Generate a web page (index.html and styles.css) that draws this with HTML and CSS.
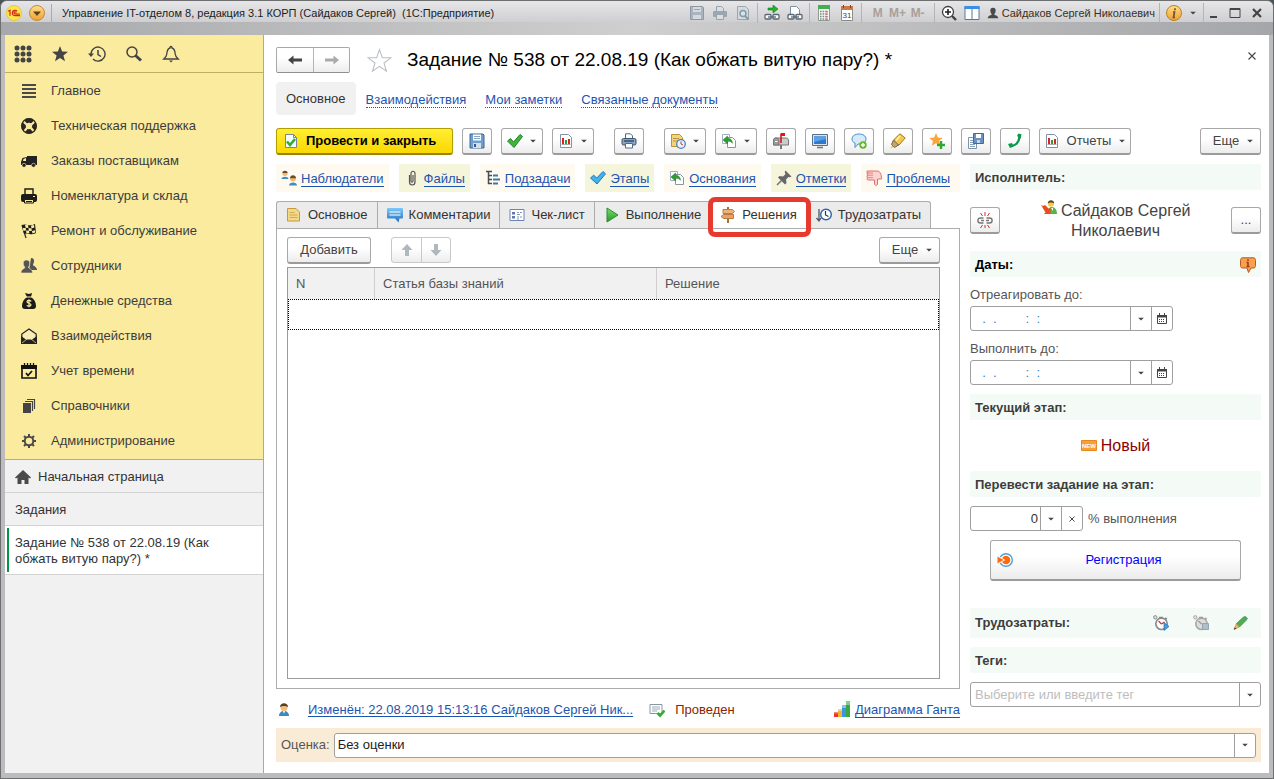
FILE: index.html
```html
<!DOCTYPE html>
<html lang="ru">
<head>
<meta charset="utf-8">
<title>Управление IT-отделом 8</title>
<link rel="stylesheet" href="styles.css">
</head>
<body>
<svg class="defs" aria-hidden="true">
  <defs>
    <linearGradient id="g-green" x1="0" y1="0" x2="0" y2="1"><stop offset="0" stop-color="#7fdc6a"/><stop offset="1" stop-color="#1f9a2e"/></linearGradient>
    <linearGradient id="g-blue" x1="0" y1="0" x2="0" y2="1"><stop offset="0" stop-color="#7cc8f8"/><stop offset="1" stop-color="#1c6fc4"/></linearGradient>
    <linearGradient id="g-gold" x1="0" y1="0" x2="0" y2="1"><stop offset="0" stop-color="#ffdf8a"/><stop offset="1" stop-color="#f0a030"/></linearGradient>
    <symbol id="floppy" viewBox="0 0 16 16"><path d="M1 1h13l1 1v13H1z" fill="#6f9fd0" stroke="#3d6796"/><path d="M4 1.500h8v6H4z" fill="#fff"/><path d="M5 3.500h6M5 5.500h6" stroke="#8aa4bd"/><path d="M4 10h8v5H4z" fill="#d7dee6"/><path d="M5 11h2v3H5z" fill="#345a86"/></symbol>
    <symbol id="floppy-off" viewBox="0 0 16 16"><path d="M1.500 1.500h12l1 1v12h-13z" fill="#a9b4be" stroke="#8d9aa6"/><path d="M4 2h8v5H4zM4 10h8v4H4z" fill="#d5dade"/><path d="M5 4.500h6" stroke="#9aa6b0"/></symbol>
    <symbol id="print-off" viewBox="0 0 16 16"><path d="M4.500 6V1.500h5l2 2V6" fill="#dcdfe2" stroke="#98a3ad"/><rect x="1" y="6" width="14" height="6" rx="1" fill="#9aa6b1"/><path d="M4.500 9.500h7v5h-7z" fill="#dcdfe2" stroke="#98a3ad"/></symbol>
    <symbol id="preview-off" viewBox="0 0 16 16"><path d="M2.500 1.500h8l3 3v10h-11z" fill="#d5dadd" stroke="#98a7ad"/><circle cx="8" cy="8.500" r="3" fill="#d5e2e8" stroke="#839ba6" stroke-width="1.500"/><path d="M10 11l3.500 3.500" stroke="#839ba6" stroke-width="2"/></symbol>
    <symbol id="link-go" viewBox="0 0 16 16"><path d="M4 3h5V0l5 4-5 4V5H4z" fill="#22b422" stroke="#0c7d16" stroke-width=".6"/><rect x="1" y="9.500" width="6" height="4.500" rx="1" fill="#fff" stroke="#596673" stroke-width="1.300"/><rect x="9" y="9.500" width="6" height="4.500" rx="1" fill="#fff" stroke="#596673" stroke-width="1.300"/><path d="M4 12h8" stroke="#596673" stroke-width="1.300"/></symbol>
    <symbol id="link-doc" viewBox="0 0 16 16"><path d="M3.500 9V1.500h6l3 3V9" fill="#fff" stroke="#7c8fa3"/><rect x="1" y="9.500" width="6" height="4.500" rx="1" fill="#fff" stroke="#596673" stroke-width="1.300"/><rect x="9" y="9.500" width="6" height="4.500" rx="1" fill="#fff" stroke="#596673" stroke-width="1.300"/><path d="M4 12h8" stroke="#596673" stroke-width="1.300"/></symbol>
    <symbol id="calc" viewBox="0 0 16 16"><path d="M2.500.5h11v15h-11z" fill="#f6f6f6" stroke="#8f9a94"/><path d="M2 0h12v4H2z" fill="#45ae4e"/><path d="M4 6.500h8M4 9h8M4 11.500h8M4 14h8" stroke="#7d8a84" stroke-width="1.400" stroke-dasharray="1.600 1"/><path d="M11 6v9" stroke="#c84a3c" stroke-dasharray="1.500 1"/></symbol>
    <symbol id="cal31" viewBox="0 0 16 16"><path d="M2.500 2.500h11v13h-11z" fill="#fff" stroke="#8b8b8b"/><path d="M2 1h12v4H2z" fill="#c9794a"/><path d="M4.500 0v3M11.500 0v3" stroke="#7b4424"/><text x="8" y="13" font-size="8" text-anchor="middle" fill="#444">31</text></symbol>
    <symbol id="zoomin" viewBox="0 0 16 16"><circle cx="7" cy="7" r="5.500" fill="#fff" stroke="#404040" stroke-width="1.300"/><path d="M4 7h6M7 4v6" stroke="#222" stroke-width="1.600"/><path d="M11 11l4 4" stroke="#404040" stroke-width="2.400"/></symbol>
    <symbol id="panels" viewBox="0 0 16 16"><path d="M1 1.500h14v13H1zM8 4v11" fill="#fff" stroke="#56789c"/><path d="M.5 1h15v3H.5z" fill="#3c8ee0"/></symbol>
    <symbol id="person-dark" viewBox="0 0 16 16"><path d="M8 1c3 0 3.800 2 3.500 4.500S9.700 9 9.700 10c0 1 5.300 1 5.300 5H1c0-4 5.300-4 5.300-5 0-1-1.500-2-1.800-4.500S5 1 8 1z" fill="#4a4a4a"/></symbol>
    <symbol id="tri" viewBox="0 0 8 8"><path d="M1.200 2.800h5.600L4 5.600z" fill="#444"/></symbol>
    <symbol id="grid9" viewBox="0 0 18 18"><g fill="#444"><circle cx="3" cy="3" r="2.500"/><circle cx="9" cy="3" r="2.500"/><circle cx="15" cy="3" r="2.500"/><circle cx="3" cy="9" r="2.500"/><circle cx="9" cy="9" r="2.500"/><circle cx="15" cy="9" r="2.500"/><circle cx="3" cy="15" r="2.500"/><circle cx="9" cy="15" r="2.500"/><circle cx="15" cy="15" r="2.500"/></g></symbol>
    <symbol id="star" viewBox="0 0 18 18"><path d="M9 1l2.100 5.500 5.900.3-4.600 3.700 1.600 5.800L9 13l-5 3.300 1.600-5.800L1 6.800l5.900-.3z" fill="#444"/></symbol>
    <symbol id="history" viewBox="0 0 18 18"><path d="M3 9a7 7 0 1 1 2 5" fill="none" stroke="#444" stroke-width="1.400"/><path d="M0 8.500h6L3 12z" fill="#444"/><path d="M10 5v4.500l3 2" fill="none" stroke="#444" stroke-width="1.500"/></symbol>
    <symbol id="search" viewBox="0 0 18 18"><circle cx="7" cy="7" r="5" fill="none" stroke="#444" stroke-width="1.500"/><path d="M10.500 10.500l5.500 5" stroke="#444" stroke-width="3"/></symbol>
    <symbol id="bell" viewBox="0 0 18 18"><path d="M9 1.500c1 0 1 1 1 1.500 2.500.6 3 3 3.200 6 .2 2.500 1.200 3.500 3 5H1.800c1.800-1.500 2.800-2.500 3-5C5 6 5.500 3.600 8 3c0-.5 0-1.500 1-1.500z" fill="none" stroke="#444" stroke-width="1.300"/><path d="M7 15.500h4l-2 2z" fill="#444"/></symbol>
    <symbol id="lines" viewBox="0 0 16 16"><path d="M1 2h14M1 6h14M1 10h14M1 14h14" stroke="#4a4a4a" stroke-width="2"/></symbol>
    <symbol id="ring" viewBox="0 0 16 16"><circle cx="8" cy="8" r="5.500" fill="none" stroke="#2b2622" stroke-width="4.600"/><path d="M2.500 3.500l3 3M13.500 3.500l-3 3M3.500 13l2.500-3M12.500 13L10 10" stroke="#faeb9f" stroke-width="2.200"/><circle cx="8" cy="8" r="7.300" fill="none" stroke="#2b2622" stroke-width="1.200"/></symbol>
    <symbol id="truck" viewBox="0 0 16 16"><path d="M6 3h10v9H0V9l1.500-4L6 4z" fill="#222"/><path d="M2.500 6L5 5v3H2z" fill="#faeb9f"/><circle cx="3" cy="12.300" r="2" fill="#222" stroke="#faeb9f" stroke-width=".6"/><circle cx="12.500" cy="12.300" r="2" fill="#222" stroke="#faeb9f" stroke-width=".6"/></symbol>
    <symbol id="printer-dark" viewBox="0 0 16 16"><path d="M4 7V1h8v6" fill="#faeb9f" stroke="#1b1b1b" stroke-width="1.400"/><rect y="6" width="16" height="8" rx="2" fill="#1b1b1b"/><path d="M3.500 11.500h9V15h-9z" fill="#faeb9f" stroke="#1b1b1b"/><path d="M5 13.500h6" stroke="#1b1b1b"/><path d="M12 8.500h2" stroke="#faeb9f"/></symbol>
    <symbol id="flag" viewBox="0 0 16 16"><path d="M1 2l4 13" stroke="#333" stroke-width="1.300"/><path d="M1 2c4-2 7 2 13-1l1 9c-5 3-8-1-12 1z" fill="#1b1b1b"/><path d="M4 1.500l3 .5.500 3-3-.3zM10 2.500l3-.5.400 2.600-3 .8zM1.800 5l2.800-.3.600 2.600-2.700.6zM7.500 5l3 .6.300 2.500-3-.2zM5 7.500l3 .3.400 2.500-3-.2zM11 8l3-.8.300 2.300-2.800.9z" fill="#faeb9f"/></symbol>
    <symbol id="people" viewBox="0 0 16 16"><path d="M10 0c2.500 0 3.300 1.500 3 3.700-.2 1.700-1 2.200-1 3.300 0 1 4 1.500 4 5H8z" fill="#555"/><path d="M5.500 2c2.500 0 3.500 1.500 3.200 4C8.500 8 7.500 8.500 7.500 9.500c0 1.200 4 1 4 5.500H0c0-4.500 3.800-4 3.800-5.500 0-1-1.300-1.500-1.500-3.500-.2-2.500.7-4 3.200-4z" fill="#555" stroke="#faeb9f" stroke-width=".6"/></symbol>
    <symbol id="money" viewBox="0 0 16 16"><path d="M4 0l4 1 3-1-1 4c3 2 5 5 5 9 0 2-1 3-3 3H4c-2 0-3-1-3-3 0-4 2-7 5-9z" fill="#1b1b1b"/><path d="M5 4h6" stroke="#faeb9f"/><path d="M10.300 8.300C9 7 6 7 6 8.700s4 1.300 4 3.100-3 1.900-4.300.6M8 6.300v8" fill="none" stroke="#faeb9f" stroke-width="1.200"/></symbol>
    <symbol id="mail" viewBox="0 0 16 16"><path d="M.8 15V6L8 1l7.200 5v9z" fill="#f8edb5" stroke="#222" stroke-width="1.200"/><path d="M0 8l5 3.500h6L16 8v8H0z" fill="#222"/><path d="M1 15l5-4M15 15l-5-4" stroke="#faeb9f" stroke-width=".7"/></symbol>
    <symbol id="cal-dark" viewBox="0 0 16 16"><path d="M1 3h14v12H1z" fill="none" stroke="#111" stroke-width="1.600"/><path d="M0 2h16v4H0z" fill="#111"/><path d="M3.500 0v3M6.500 0v3M9.500 0v3M12.500 0v3" stroke="#111" stroke-width="1.300"/><path d="M5 10l2 2.500L11 8" fill="none" stroke="#111" stroke-width="1.700"/></symbol>
    <symbol id="books" viewBox="0 0 16 16"><path d="M2 5h8v10H2z" fill="#444"/><path d="M4 3.500h7.500V13M6 1.500h7.500V11" fill="none" stroke="#444" stroke-width="1.200"/></symbol>
    <symbol id="gear" viewBox="0 0 16 16"><circle cx="8" cy="8" r="4.300" fill="none" stroke="#4a4a4a" stroke-width="2"/><path d="M8 1v3M8 12v3M1 8h3M12 8h3M3 3l2 2M11 11l2 2M3 13l2-2M11 5l2-2" stroke="#4a4a4a" stroke-width="2"/></symbol>
    <symbol id="home" viewBox="0 0 16 16"><path d="M8 1l8 7.500-1 1-1.500-1V15H9.500v-4h-3v4h-4V8.500L1 9.500l-1-1z" fill="#4a4a4a"/></symbol>
    <symbol id="arr-l" viewBox="0 0 16 16"><path d="M1 8l5.500-4.500v3H15v3H6.500v3z" fill="#444"/></symbol>
    <symbol id="arr-r" viewBox="0 0 16 16"><path d="M15 8L9.500 3.500v3H1v3h8.500v3z" fill="#aaa"/></symbol>
    <symbol id="star-o" viewBox="0 0 24 24"><path d="M12 1.500l2.700 7.800 8.200.1-6.600 5 2.400 7.900L12 17.600l-6.700 4.700 2.400-7.900-6.600-5 8.200-.1z" fill="#fff" stroke="#b8bec4"/></symbol>
    <symbol id="doc-ok" viewBox="0 0 16 16"><path d="M2.500 1.500h8l3 3v10h-11z" fill="#f7faff" stroke="#72879a"/><path d="M10.500 1.500v3h3" fill="none" stroke="#72879a"/><path d="M4 8.500l3 3.500 5-6" fill="none" stroke="#2cae35" stroke-width="2.600"/></symbol>
    <symbol id="check-g" viewBox="0 0 16 16"><path d="M.5 8l3-2.500L6.500 9 13 1.500l2.500 2L7 14.500z" fill="#3fb53f" stroke="#23802b"/></symbol>
    <symbol id="check-b" viewBox="0 0 16 16"><path d="M.5 8l3.200-2.800L6.800 8 13 1.500l2.500 2.300L7 14z" fill="#3fb4f0" stroke="#2177b8"/></symbol>
    <symbol id="chart" viewBox="0 0 16 16"><path d="M2.500 1.500h8l3 3v10h-11z" fill="#fff" stroke="#8293a5"/><path d="M5 5v6" stroke="#d22" stroke-width="2"/><path d="M8 7v4" stroke="#29a038" stroke-width="2"/><path d="M11 6v5" stroke="#d22" stroke-width="2"/><path d="M3.500 11.500h9" stroke="#aaa"/></symbol>
    <symbol id="print" viewBox="0 0 16 16"><path d="M4.500 6V.8h5l2 2V6" fill="#fff" stroke="#4e6c8d"/><rect x="1" y="5.500" width="14" height="6.500" rx="1.500" fill="#8aa6c2" stroke="#36536f"/><path d="M3 8h10" stroke="#304e6d" stroke-width="1.500"/><path d="M4.500 10.500h7v4.500h-7z" fill="#fff" stroke="#4e6c8d"/></symbol>
    <symbol id="note-clock" viewBox="0 0 16 16"><path d="M1.500 1.500h8l3 3v9h-11z" fill="#f2d47c" stroke="#b99342"/><path d="M3 5.500h6M3 8h6" stroke="#b99342"/><circle cx="11" cy="11" r="4.300" fill="#e8f3ff" stroke="#4d80b8" stroke-width="1.300"/><path d="M11 11V8.500M11 11l2 1" stroke="#c33"/></symbol>
    <symbol id="doc-back" viewBox="0 0 16 16"><path d="M1.500 1.500h7v9h-7z" fill="#fff" stroke="#9fb0bf"/><path d="M6.500 4.500h5l3 3v7h-8z" fill="#fff" stroke="#8498aa"/><path d="M2 7l4.500-4v2.300c3 0 4.700 1.500 5 5-1.200-1.700-2.700-2-5-2V11z" fill="#2f9e35" stroke="#1d7425" stroke-width=".5"/></symbol>
    <symbol id="mailbox" viewBox="0 0 16 16"><path d="M3 5h10c2 0 2.500 1 2.500 3v4H.5V8c0-2 .7-3 2.500-3z" fill="#ccc" stroke="#777"/><path d="M6 12V8c0-2-1-3-3-3S.5 6 .5 8v4z" fill="#9b9b9b" stroke="#777"/><path d="M2 8.500h2.500" stroke="#fff"/><path d="M8 10V.5" stroke="#c11" stroke-width="1.500"/><path d="M8 0h4v3H8z" fill="#e11"/><path d="M8 12v4" stroke="#777" stroke-width="2"/></symbol>
    <symbol id="monitor" viewBox="0 0 16 16"><path d="M.5 1.500h15v11H.5z" fill="#dbe2e9" stroke="#5d6f80"/><path d="M2 3h12v8H2z" fill="#2c78cf"/><path d="M2 3h12v3L2 9z" fill="#5da0e8"/><path d="M5 14.500h6" stroke="#777" stroke-width="1.600"/></symbol>
    <symbol id="chat-add" viewBox="0 0 16 16"><path d="M8 1c4 0 7 2 7 5s-3 5-7 5H7l-3 3.500V10C2 9.500 1 8 1 6c0-3 3-5 7-5z" fill="#d6eafb" stroke="#4b8ec6"/><circle cx="12" cy="12" r="3.700" fill="#69b72c"/><path d="M12 10v4M10 12h4" stroke="#fff" stroke-width="1.400"/></symbol>
    <symbol id="marker" viewBox="0 0 16 16"><path d="M10 .8L15.200 5 9 12l-4.500.5L3 11l1-4.500z" fill="#f7c948" stroke="#a4741c"/><path d="M3.500 7l5 5-4 2.500-3-3z" fill="#b8a882" stroke="#75603a"/><path d="M2 13l-1.500 2.500L4 14z" fill="#f0c020"/><path d="M10 3L6 7.500" stroke="#fff3b5" stroke-width="1.500"/></symbol>
    <symbol id="star-add" viewBox="0 0 16 16"><path d="M7 0l1.800 4.600 4.900.3L10 8l1.200 4.800L7 10.200l-4.200 2.600L4 8 .3 4.900l4.900-.3z" fill="#f8a63a"/><path d="M12 8v8M8 12h8" stroke="#2fa82f" stroke-width="2.400"/></symbol>
    <symbol id="doc-save" viewBox="0 0 16 16"><path d="M.5 4.500h8v11h-8z" fill="#fff" stroke="#7c94ab"/><path d="M2 7.500h5M2 9.500h5M2 11.500h5M2 13.500h5" stroke="#8ba1b6"/><path d="M5.500.5h10v10h-10z" fill="#6992c0" stroke="#456a96"/><path d="M8 1h5v4H8z" fill="#fff"/><path d="M9 7h3v3H9z" fill="#c9d6e4"/></symbol>
    <symbol id="phone" viewBox="0 0 16 16"><path d="M3.500 13c5 0 8.500-3.500 9-9.500" fill="none" stroke="#0a9a4c" stroke-width="2.400"/><path d="M1 11l4-1 1.500 3.500L3 15zM10 3l1.500-2.500 3 .8-.7 4.500z" fill="#0a9a4c"/></symbol>
    <symbol id="users" viewBox="0 0 16 16"><path d="M.5 9c0-3 7-3 7 0z" fill="#3f8fbd"/><circle cx="4" cy="3.300" r="2.600" fill="#f0b878"/><path d="M1.400 3C1.500 0 6.500 0 6.600 3z" fill="#704a28"/><path d="M8 15.500c0-4 8-4 8 0z" fill="#3f8fbd"/><circle cx="12" cy="8.600" r="2.900" fill="#f0b878"/><path d="M9 8.300c0-4 6-4 6 0z" fill="#704a28"/></symbol>
    <symbol id="user" viewBox="0 0 16 16"><path d="M3 14c0-3 2-5 5-5s5 2 5 5z" fill="#3a8ac0"/><circle cx="8" cy="5.500" r="3.500" fill="#f2bb78"/><path d="M4 5c0-5 8-5 8 0-2-1.500-6-1.500-8 0z" fill="#55402b"/><path d="M7 9h2l-1 3z" fill="#fff"/></symbol>
    <symbol id="clip" viewBox="0 0 16 16"><path d="M5.500 5v7c0 4 5.500 4 5.500 0V3.500c0-3-4-3-4 0V11c0 1.500 2 1.500 2 0V5" fill="none" stroke="#555" stroke-width="1.200"/></symbol>
    <symbol id="tree" viewBox="0 0 16 16"><path d="M1 1.500h6M3.500 2v11.500H7M3.500 5.500H7M3.500 9.500H7" fill="none" stroke="#454d55" stroke-width="1.500"/><path d="M8 5.500h5M8 9.500h7M8 13.500h5" stroke="#3f78a8" stroke-width="2"/></symbol>
    <symbol id="pin" viewBox="0 0 16 16"><path d="M9.500.5l6 6-1.500.8-1.500-.3-2.500 2.500.5 3.500L9 14.500 2 7.500 3.500 6l3.500.5L9.500 4 8.700 2z" fill="#66676a"/><path d="M5.500 10.500L1 15" stroke="#777" stroke-width="1.600"/></symbol>
    <symbol id="thumb" viewBox="0 0 16 16"><path d="M1 1h10c3 0 4.500 3 4.500 8h-4v5c0 2-3 2-3-1v-3H2.500c-2 0-2-2-.5-2.300C.5 7.300.5 5.500 2 5.200.5 4.500.5 3 2.200 3 .5 2.500.5 1.500 1 1z" fill="#fbd3d0" stroke="#e07070"/><path d="M2 3h5M2 5.200h5M2 7.700h5" stroke="#e07070" stroke-width=".8"/></symbol>
    <symbol id="note" viewBox="0 0 16 16"><path d="M1.500 1.500h8.500l3.500 3.500v9h-12z" fill="#f3d88a" stroke="#c49a3c"/><path d="M3.500 5.500h5M3.500 8h8M3.500 10.500h8" stroke="#d0ab52"/></symbol>
    <symbol id="comment" viewBox="0 0 16 16"><path d="M1 1h14a1 1 0 0 1 1 1v8.500a1 1 0 0 1-1 1h-2.500L11.500 15.500 8 11.500H1a1 1 0 0 1-1-1V2a1 1 0 0 1 1-1z" fill="url(#g-blue)"/><path d="M2.500 5h11M2.500 8h11" stroke="#fff" stroke-width="1.200"/></symbol>
    <symbol id="checklist" viewBox="0 0 16 16"><path d="M1 2.500h14v11H1z" fill="#fff" stroke="#6f85b7"/><path d="M3 5h3v2.500H3zM3 9h3v2.500H3z" fill="#6379a8"/><path d="M8 5.500h2M11 5.500h2M8 7.500h3M8 10h2M11 10h2M8 12h2" stroke="#8294b8"/></symbol>
    <symbol id="play" viewBox="0 0 16 16"><path d="M3 1l11 7-11 7z" fill="url(#g-green)" stroke="#2b8d2b"/></symbol>
    <symbol id="sign" viewBox="0 0 16 16"><path d="M8 0v16" stroke="#a8713a" stroke-width="2"/><path d="M3 2.500h9.500l2 2-2 2H3z" fill="#eeb177" stroke="#bd7b40"/><path d="M3.500 7.500h10v4h-10l-2.500-2z" fill="#e5a368" stroke="#bd7b40"/></symbol>
    <symbol id="timer" viewBox="0 0 16 16"><path d="M3 2v11M0.500 11L3 14l2-3" fill="none" stroke="#555" stroke-width="1.300"/><circle cx="10" cy="7.500" r="5.300" fill="#fff" stroke="#2d62a8" stroke-width="1.400"/><path d="M9.500 4v4l3 1.500" fill="none" stroke="#333" stroke-width="1.200"/></symbol>
    <symbol id="up" viewBox="0 0 16 16"><path d="M8 2l5.500 6H10v6H6V8H2.500z" fill="#aeb8bd"/></symbol>
    <symbol id="down" viewBox="0 0 16 16"><path d="M8 14l5.500-6H10V2H6v6H2.500z" fill="#aeb8bd"/></symbol>
    <symbol id="unlink" viewBox="0 0 16 16"><path d="M6.500 6H3.500C0 6 0 11 3.500 11h3M9.500 6h3C16 6 16 11 12.500 11h-3M4 8.500h3M9 8.500h3" fill="none" stroke="#777" stroke-width="1.400"/><path d="M8 0v4M3.500 1l2 3M12.500 1l-2 3M8 13v3M3.500 16l2-3M12.500 16l-2-3" stroke="#c33"/></symbol>
    <symbol id="assignee" viewBox="0 0 16 16"><path d="M6 14c0-5 2-7 5-7s5 3 5 7z" fill="#58b548"/><path d="M10 8h2v3z" fill="#fff"/><circle cx="10" cy="3.800" r="3" fill="#f4cf3c"/><path d="M6.800 3.500c0-4.500 6.400-4.500 6.400 0-2-1.500-4.500-1.500-6.400 0z" fill="#5a4520"/><path d="M0 5l2 1 2-1 4 4 1.500-1.500V14H3l1.500-1.500z" fill="#f04a1e"/></symbol>
    <symbol id="info-o" viewBox="0 0 16 16"><path d="M3 .8h10c2 0 2.500 1 2.500 2.700v5c0 1.700-.5 2.500-2.500 2.500h-2L8.500 15.500 7 11H3C1 11 .5 10.200.5 8.500v-5C.5 1.800 1 .8 3 .8z" fill="#f8a04c" stroke="#b85620"/><path d="M8 2.300v1.800M6.500 5.500H8v4M6.500 9.500h3" fill="none" stroke="#9a3a1c" stroke-width="1.500"/></symbol>
    <symbol id="mini-cal" viewBox="0 0 12 12"><path d="M1.500 2.500h9v8h-9z" fill="#fff" stroke="#444"/><path d="M1 2h10v2.500H1z" fill="#444"/><path d="M3.500 0v3M8.500 0v3" stroke="#444"/><path d="M3 6.500h6M3 8.500h6" stroke="#444" stroke-dasharray="1 1"/></symbol>
    <symbol id="new" viewBox="0 0 16 16"><path d="M.5 2.500h15v10H.5z" fill="#f8a032" stroke="#e58a22"/><text x="8" y="10" font-size="6" font-weight="bold" text-anchor="middle" fill="#fff">NEW</text></symbol>
    <symbol id="reg" viewBox="0 0 16 16"><circle cx="9" cy="8" r="6.300" fill="#fff" stroke="#4aa0d8" stroke-width="1.400"/><circle cx="9" cy="8" r="4.300" fill="#ff6a10"/><path d="M0 3.800L7.500 8 0 12.200z" fill="#ff6a10" stroke="#fff" stroke-width="1"/></symbol>
    <symbol id="watch-go" viewBox="0 0 16 16"><circle cx="2.300" cy="2.300" r="1.700" fill="#ddd" stroke="#8c8c8c"/><circle cx="8.500" cy="8.800" r="5.700" fill="#fff" stroke="#8b8b8b" stroke-width="1.700"/><path d="M8.500 9l-3-3M8.500 9l3-2" stroke="#c33" stroke-width="1.200"/><path d="M6 2.500h4M12 3l2 1" stroke="#888" stroke-width="1.500"/><path d="M11 7.500l5 4-5 4z" fill="#4a9be0" stroke="#2870b2" stroke-width=".7"/></symbol>
    <symbol id="watch-off" viewBox="0 0 16 16"><circle cx="2.300" cy="2.300" r="1.700" fill="#ddd" stroke="#aaa"/><circle cx="8.500" cy="8.800" r="5.700" fill="#ddd" stroke="#aaa" stroke-width="1.700"/><path d="M8.500 9l-3-3M6 2.500h4M12 3l2 1" stroke="#999" stroke-width="1.300"/><path d="M9.500 8.500h6v6h-6z" fill="#aebfc9" stroke="#93a5b0"/></symbol>
    <symbol id="pencil" viewBox="0 0 16 16"><path d="M3.500 8.500l7-6.500 3 3-7 7z" fill="#4cb050" stroke="#2d7a35" stroke-width=".6"/><path d="M10.500 2l1.500-1.200L15 3.500 13.500 5z" fill="#596"/><path d="M3.500 8.500l3 3.500L1 14.500z" fill="#e8b868" stroke="#a87a38" stroke-width=".6"/><path d="M1 14.500l.8-2 1.300 1.200z" fill="#222"/></symbol>
    <symbol id="posted" viewBox="0 0 16 16"><path d="M1 2.500h12v9H1z" fill="#fff" stroke="#8797a6"/><path d="M3 5h8M3 7h8M3 9h5" stroke="#9aa8b4"/><path d="M8.500 11l2.500 2.500 4.500-5" fill="none" stroke="#32ab38" stroke-width="2.600"/></symbol>
    <symbol id="gantt" viewBox="0 0 16 16"><path d="M0 11h4v5H0z" fill="#e33"/><path d="M4 8h4v8H4z" fill="#f3b52c"/><path d="M8 4h4v12H8z" fill="#3d95df"/><path d="M12 0h4v16h-4z" fill="#3aa83e"/><path d="M0 11h4v1.500H0zM4 8h4v2H4zM8 4h4v3H8zM12 0h4v4h-4z" fill="#fff" opacity=".4"/></symbol>
  </defs>
</svg>

<div class="window">
  <header class="titlebar">
    <svg class="logo" viewBox="0 0 16 16" aria-hidden="true"><circle cx="8" cy="8" r="7.500" fill="#fbe64b" stroke="#e6c93a"/><path d="M2.200 6.300L4 5.200v5.600M11 6.200C9.800 4.600 6.300 5 6.300 8s2.500 2.800 7.700 2.600M10.500 7.300C9.300 6.400 8 7 8 8s1 1.200 6 1" fill="none" stroke="#d8201c" stroke-width="1.200"/></svg>
    <button class="round" aria-label="Главное меню"><svg viewBox="0 0 16 16"><circle cx="8" cy="8" r="7.500" fill="url(#g-gold)" stroke="#c08a3a"/><path d="M4 6.500h8L8 11z" fill="#5b4420"/></svg></button>
    <span class="sep"></span>
    <h1 class="app-title">Управление IT-отделом 8, редакция 3.1 КОРП (Сайдаков Сергей)&nbsp; (1С:Предприятие)</h1>
    <div class="sys">
      <div class="group"><button aria-label="Сохранить"><svg><use href="#floppy-off"/></svg></button><button aria-label="Печать"><svg><use href="#print-off"/></svg></button><button aria-label="Просмотр"><svg><use href="#preview-off"/></svg></button></div>
      <div class="group line"><button aria-label="Перейти по ссылке"><svg><use href="#link-go"/></svg></button><button aria-label="Получить ссылку"><svg><use href="#link-doc"/></svg></button></div>
      <div class="group line"><button aria-label="Калькулятор"><svg><use href="#calc"/></svg></button><button aria-label="Календарь"><svg><use href="#cal31"/></svg></button></div>
      <div class="group line memory"><button>M</button><button>M+</button><button>M-</button></div>
      <div class="group line"><button aria-label="Масштаб"><svg><use href="#zoomin"/></svg></button><button aria-label="Панели"><svg><use href="#panels"/></svg></button></div>
      <div class="group account"><svg><use href="#person-dark"/></svg><span>Сайдаков Сергей Николаевич</span></div>
      <div class="group line help"><button aria-label="Справка"><svg viewBox="0 0 16 16"><circle cx="8" cy="8" r="7.500" fill="url(#g-gold)" stroke="#b98028"/><path d="M9 3.200v2M7 7h1.500l-1 5.500H9" fill="none" stroke="#6a5638" stroke-width="1.700"/></svg></button><svg class="tri"><use href="#tri"/></svg></div>
      <div class="group line winbtns"><button aria-label="Свернуть"><svg viewBox="0 0 16 16"><path d="M5 12h7" stroke="#444" stroke-width="2"/></svg></button><button aria-label="Развернуть"><svg viewBox="0 0 16 16"><path d="M3 3.500h10v9H3z" fill="none" stroke="#444"/><path d="M3 4h10" stroke="#444" stroke-width="2"/></svg></button><button aria-label="Закрыть"><svg viewBox="0 0 16 16"><path d="M4 4l8 8M12 4l-8 8" stroke="#444" stroke-width="2.200"/></svg></button></div>
    </div>
  </header>

  <div class="client">
    <aside class="sidebar">
      <div class="tools"><button aria-label="Меню функций"><svg><use href="#grid9"/></svg></button><button aria-label="Избранное"><svg><use href="#star"/></svg></button><button aria-label="История"><svg><use href="#history"/></svg></button><button aria-label="Поиск"><svg><use href="#search"/></svg></button><button aria-label="Оповещения"><svg><use href="#bell"/></svg></button></div>
      <nav class="sections">
        <a href="#"><svg><use href="#lines"/></svg>Главное</a>
        <a href="#"><svg><use href="#ring"/></svg>Техническая поддержка</a>
        <a href="#"><svg><use href="#truck"/></svg>Заказы поставщикам</a>
        <a href="#"><svg><use href="#printer-dark"/></svg>Номенклатура и склад</a>
        <a href="#"><svg><use href="#flag"/></svg>Ремонт и обслуживание</a>
        <a href="#"><svg><use href="#people"/></svg>Сотрудники</a>
        <a href="#"><svg><use href="#money"/></svg>Денежные средства</a>
        <a href="#"><svg><use href="#mail"/></svg>Взаимодействия</a>
        <a href="#"><svg><use href="#cal-dark"/></svg>Учет времени</a>
        <a href="#"><svg><use href="#books"/></svg>Справочники</a>
        <a href="#"><svg><use href="#gear"/></svg>Администрирование</a>
      </nav>
      <nav class="opened">
        <a href="#"><svg><use href="#home"/></svg>Начальная страница</a>
        <a href="#">Задания</a>
        <a href="#" class="current">Задание № 538 от 22.08.19 (Как обжать витую пару?) *</a>
      </nav>
    </aside>

    <main class="form">
      <div class="heading">
        <div class="pair"><button aria-label="Назад"><svg><use href="#arr-l"/></svg></button><button aria-label="Вперед"><svg><use href="#arr-r"/></svg></button></div>
        <button class="fav" aria-label="В избранное"><svg><use href="#star-o"/></svg></button>
        <h2>Задание № 538 от 22.08.19 (Как обжать витую пару?) *</h2>
        <button class="close" aria-label="Закрыть"><svg viewBox="0 0 10 10"><path d="M1.500 1.500l7 7M8.500 1.500l-7 7" stroke="#444" stroke-width="1.100"/></svg></button>
      </div>

      <nav class="pages"><span class="here">Основное</span><a href="#">Взаимодействия</a><a href="#">Мои заметки</a><a href="#">Связанные документы</a></nav>

      <div class="commands">
        <button class="btn primary"><svg><use href="#doc-ok"/></svg>Провести и закрыть</button>
        <button class="btn" aria-label="Записать"><svg><use href="#floppy"/></svg></button>
        <button class="btn drop" aria-label="Провести"><svg><use href="#check-g"/></svg><svg class="tri"><use href="#tri"/></svg></button>
        <button class="btn drop" aria-label="Отчет"><svg><use href="#chart"/></svg><svg class="tri"><use href="#tri"/></svg></button>
        <button class="btn apart" aria-label="Печать"><svg><use href="#print"/></svg></button>
        <button class="btn drop apart" aria-label="Запланировать"><svg><use href="#note-clock"/></svg><svg class="tri"><use href="#tri"/></svg></button>
        <button class="btn drop" aria-label="Создать на основании"><svg><use href="#doc-back"/></svg><svg class="tri"><use href="#tri"/></svg></button>
        <button class="btn" aria-label="Почта"><svg><use href="#mailbox"/></svg></button>
        <button class="btn" aria-label="Подключение"><svg><use href="#monitor"/></svg></button>
        <button class="btn" aria-label="Комментарий"><svg><use href="#chat-add"/></svg></button>
        <button class="btn" aria-label="Отметка"><svg><use href="#marker"/></svg></button>
        <button class="btn" aria-label="Добавить в избранное"><svg><use href="#star-add"/></svg></button>
        <button class="btn" aria-label="Сохранить копию"><svg><use href="#doc-save"/></svg></button>
        <button class="btn" aria-label="Позвонить"><svg><use href="#phone"/></svg></button>
        <button class="btn reports"><svg><use href="#chart"/></svg>Отчеты<svg class="tri"><use href="#tri"/></svg></button>
        <button class="btn more">Еще<svg class="tri"><use href="#tri"/></svg></button>
      </div>

      <div class="columns">
        <section class="work">
          <nav class="related">
            <a href="#"><svg><use href="#users"/></svg><span>Наблюдатели</span></a>
            <a href="#"><svg><use href="#clip"/></svg><span>Файлы</span></a>
            <a href="#"><svg><use href="#tree"/></svg><span>Подзадачи</span></a>
            <a href="#"><svg><use href="#check-b"/></svg><span>Этапы</span></a>
            <a href="#"><svg><use href="#doc-back"/></svg><span>Основания</span></a>
            <a href="#"><svg><use href="#pin"/></svg><span>Отметки</span></a>
            <a href="#"><svg><use href="#thumb"/></svg><span>Проблемы</span></a>
          </nav>
          <div class="tabs" role="tablist">
            <button role="tab"><svg><use href="#note"/></svg>Основное</button>
            <button role="tab"><svg><use href="#comment"/></svg>Комментарии</button>
            <button role="tab"><svg><use href="#checklist"/></svg>Чек-лист</button>
            <button role="tab"><svg><use href="#play"/></svg>Выполнение</button>
            <button role="tab" class="selected" aria-selected="true"><svg><use href="#sign"/></svg>Решения</button>
            <button role="tab"><svg><use href="#timer"/></svg>Трудозатраты</button>
          </div>
          <div class="panel">
            <div class="panel-bar">
              <button class="btn add">Добавить</button>
              <div class="pair faded"><button aria-label="Вверх"><svg><use href="#up"/></svg></button><button aria-label="Вниз"><svg><use href="#down"/></svg></button></div>
              <button class="btn more">Еще<svg class="tri"><use href="#tri"/></svg></button>
            </div>
            <div class="list">
              <table>
                <colgroup><col class="c-num"><col class="c-article"><col></colgroup>
                <thead><tr><th>N</th><th>Статья базы знаний</th><th>Решение</th></tr></thead>
                <tbody><tr><td colspan="3"></td></tr></tbody>
              </table>
            </div>
          </div>
          <div class="status">
            <svg><use href="#user"/></svg>
            <a href="#" class="changed">Изменён: 22.08.2019 15:13:16 Сайдаков Сергей Ник...</a>
            <svg><use href="#posted"/></svg>
            <span class="done">Проведен</span>
            <a href="#" class="gantt"><svg><use href="#gantt"/></svg><span>Диаграмма Ганта</span></a>
          </div>
        </section>

        <section class="side">
          <h3>Исполнитель:</h3>
          <div class="assignee">
            <button class="btn" aria-label="Снять исполнителя"><svg><use href="#unlink"/></svg></button>
            <p><svg><use href="#assignee"/></svg> Сайдаков Сергей<br>Николаевич</p>
            <button class="btn">...</button>
          </div>
          <h3 class="black">Даты:<svg><use href="#info-o"/></svg></h3>
          <div class="dates">
            <label for="react">Отреагировать до:</label>
            <div class="field"><input id="react" value="  .  .        :  :"><button aria-label="Список"><svg class="tri"><use href="#tri"/></svg></button><button aria-label="Календарь"><svg class="cal"><use href="#mini-cal"/></svg></button></div>
            <label for="finish">Выполнить до:</label>
            <div class="field"><input id="finish" value="  .  .        :  :"><button aria-label="Список"><svg class="tri"><use href="#tri"/></svg></button><button aria-label="Календарь"><svg class="cal"><use href="#mini-cal"/></svg></button></div>
          </div>
          <h3>Текущий этап:</h3>
          <p class="stage"><svg><use href="#new"/></svg>Новый</p>
          <h3>Перевести задание на этап:</h3>
          <div class="percent">
            <div class="field"><input id="pct" value="0"><button aria-label="Список"><svg class="tri"><use href="#tri"/></svg></button><button aria-label="Очистить"><svg class="tri" viewBox="0 0 8 8"><path d="M1.500 1.500l5 5M6.500 1.500l-5 5" stroke="#444"/></svg></button></div>
            <label for="pct">% выполнения</label>
          </div>
          <button class="btn register"><svg><use href="#reg"/></svg><span>Регистрация</span></button>
          <h3 class="effort">Трудозатраты:<span class="icons"><svg><use href="#watch-go"/></svg><svg><use href="#watch-off"/></svg><svg><use href="#pencil"/></svg></span></h3>
          <h3 class="tags-title"><label for="tags">Теги:</label></h3>
          <div class="field tags"><input id="tags" placeholder="Выберите или введите тег"><button aria-label="Список"><svg class="tri"><use href="#tri"/></svg></button></div>
        </section>
      </div>

      <div class="rating">
        <label for="rate">Оценка:</label>
        <div class="field"><select id="rate"><option>Без оценки</option></select><span class="arrow"><svg class="tri"><use href="#tri"/></svg></span></div>
      </div>
    </main>
  </div>
</div>
</body>
</html>
```
FILE: styles.css
```css
* { box-sizing: border-box; }

html, body { height: 100%; }

body {
  margin: 0;
  background: #4c555c;
  font: 13px/16px "Liberation Sans", Arial, sans-serif;
  color: #3d3d3d;
}

.defs { position: absolute; width: 0; height: 0; }

svg { width: 16px; height: 16px; flex: none; }
svg.tri { width: 8px; height: 8px; }

button, input, select { font: inherit; color: inherit; }
button { padding: 0; border: 0; background: none; display: flex; align-items: center; justify-content: center; }

h1, h2, h3, p { margin: 0; font-size: inherit; font-weight: normal; }

a { color: #1d54b0; text-decoration: none; }

/* Window frame */
.window {
  display: flex;
  flex-direction: column;
  min-height: 100%;
  padding: 0 4px 5px;
  border: 1px solid #6d6e70;
  border-radius: 7px 7px 0 0;
  background: #bcbcbe;
}

.titlebar {
  display: flex;
  align-items: center;
  height: 34px;
  margin: 0 -4px;
  padding: 0 2px 10px 5px;
  border-radius: 6px 6px 0 0;
  background:
    linear-gradient(#e6e6e8, #cfcfd1) top / 100% 21px no-repeat,
    linear-gradient(90deg, #a7a8ab, #cfcfcf 50%, #a5a6a9);
  color: #1c1c1c;
}

.logo, .round svg { display: block; }
.round { margin-left: 7px; }
.sep { width: 1px; height: 18px; margin: 0 10px 0 6px; background: #aaa; }
.app-title { flex: 1; min-width: 0; white-space: nowrap; overflow: hidden; font-size: 11px; }

.sys { display: flex; align-items: center; color: #3c3020; }
.group { display: flex; align-items: center; gap: 7px; height: 20px; padding: 0 6px; }
.line { border-left: 1px solid #b4b4b6; }
.memory { gap: 0; font-size: 12px; font-weight: bold; color: #aaa098; }
.memory button { width: 20px; }
.account { gap: 3px; padding: 0 4px 0 1px; font-size: 11px; }
.account svg { width: 12px; height: 12px; }
.winbtns { gap: 6px; padding: 0 6px 0 1px; }

.client { display: flex; flex: 1; background: #fff; }

/* Sidebar */
.sidebar {
  display: flex;
  flex-direction: column;
  flex: none;
  width: 259px;
  border-right: 1px solid #a9a9a9;
  background: #f1f1f1;
}

.tools {
  display: flex;
  gap: 19px;
  height: 38px;
  padding: 0 9px;
  border-bottom: 1px solid #bfb05e;
  background: #faeb9f;
}
.tools svg { width: 18px; height: 18px; }

.sections { border-bottom: 1px solid #bfb05e; padding-bottom: 1px; background: #faeb9f; }
.sections a { display: flex; align-items: center; gap: 14px; height: 35px; padding: 0 16px; color: #3d3d3d; }

.opened a {
  display: flex;
  align-items: center;
  gap: 7px;
  min-height: 33px;
  padding: 1px 40px 0 10px;
  border-bottom: 1px solid #d3d3d3;
  color: #333;
}
.opened .current { position: relative; min-height: 49px; background: #fff; }
.opened .current::before { content: ""; position: absolute; left: 2px; top: 2px; bottom: 2px; width: 2px; background: #009646; }

/* Form */
.form { display: flex; flex-direction: column; flex: 1; min-width: 0; padding: 11px 8px 11px 12px; }

.heading { display: flex; align-items: center; height: 28px; }
.heading h2 { flex: 1; font-size: 19px; line-height: 24px; color: #000; }
.fav { margin: 0 15px 0 17px; }
.fav svg { width: 25px; height: 25px; }
.close { align-self: flex-start; margin: 5px 4px 0 0; }
.close svg { width: 10px; height: 10px; }

.pair { display: flex; height: 26px; border: 1px solid #a8a8a8; border-bottom-color: #8f8f8f; border-radius: 2px; background: linear-gradient(#fff 40%, #ededed); }
.pair button { width: 36px; }
.pair button + button { border-left: 1px solid #b4b4b4; }
.faded { border-color: #c8c8c8; border-radius: 3px; margin-left: 20px; }
.faded button { width: 29px; }
.faded button + button { border-color: #c8c8c8; }

.pages { display: flex; align-items: center; gap: 19px; height: 33px; margin-top: 8px; }
.pages a { margin-top: 3px; border-bottom: 1px dotted #1d54b0; line-height: 14px; }
.pages .here { margin-right: -9px; padding: 9px 10px 8px; border-radius: 4px; background: #f1f1f1; color: #333; }

.btn {
  min-width: 30px;
  height: 27px;
  border: 1px solid #a8a8a8;
  border-bottom: 2px solid #9b9b9b;
  border-radius: 3px;
  background: linear-gradient(#fff 40%, #ececec);
  color: #444;
}
.commands { display: flex; gap: 9px; margin-top: 13px; }
.commands .drop { width: 42px; gap: 6px; }
.commands .apart { margin-left: 11px; }
.commands .primary { justify-content: flex-start; gap: 7px; padding: 0 11px 0 6px; border-color: #b39e00; border-bottom-color: #978500; background: linear-gradient(#ffee33, #fbd800); font-weight: bold; color: #000; }
.commands .primary { width: 177px; }
.reports { width: 92px; gap: 7px; }
.more { width: 61px; gap: 7px; margin-left: auto; padding-left: 6px; }

.columns { display: flex; flex: 1; gap: 10px; margin-top: 9px; }
.work { display: flex; flex-direction: column; flex: 1; min-width: 0; }
.side { display: flex; flex-direction: column; flex: none; width: 291px; }

.related { display: flex; gap: 10px; height: 28px; }
.related a { display: flex; align-items: center; gap: 4px; padding: 0 5px; background: #fffaf0; white-space: nowrap; }
.related a:nth-child(even) { background: #f5f5dc; }
.related a:last-child { flex: 1; }
.related span, .gantt span { margin-top: 1px; border-bottom: 1px solid #1d54b0; line-height: 15px; }

.tabs { display: flex; margin-top: 9px; }
.tabs button { gap: 6px; height: 27px; padding: 0 9px; border: 1px solid #acacac; border-width: 1px 0 0 1px; background: #ebebeb; color: #333; white-space: nowrap; }
.tabs button:first-child { border-top-left-radius: 3px; }
.tabs button:last-child { border-right-width: 1px; border-top-right-radius: 3px; }
.tabs .selected { position: relative; background: #fff; }
.tabs .selected::after { content: ""; position: absolute; inset: -5px -5px -9px -3px; border: 5px solid #e63a2e; border-radius: 7px; }

.panel { display: flex; flex-direction: column; flex: 1; padding: 8px 19px 9px 10px; border: 1px solid #acacac; }
.panel-bar { display: flex; margin-bottom: 3px; }
.add { width: 84px; }
.list { flex: 1; border: 1px solid #9b9b9b; }
.list table { width: 100%; border-collapse: separate; border-spacing: 0; table-layout: fixed; }
.c-num { width: 86px; }
.c-article { width: 282px; }
.list th { height: 31px; padding: 0 8px; border-left: 1px solid #cfcfcf; background: #f1f1f1; font-weight: normal; text-align: left; color: #555; }
.list th:first-child { border-left: 0; }
.list td { height: 31px; padding: 0; border: 1px dotted #000; }

.status { display: flex; align-items: center; height: 39px; padding-top: 2px; white-space: nowrap; }
.changed { margin: 0 16px; text-decoration: underline; text-underline-offset: 2px; }
.done { margin-left: 10px; color: #8b2500; }
.gantt { display: flex; gap: 5px; margin-left: auto; }

/* Right-hand column */
.side h3 { display: flex; align-items: center; justify-content: space-between; height: 26px; padding: 1px 5px 0; background: #f4fbf7; font-weight: bold; }
.side h3.black { color: #000; }
.assignee { display: flex; align-items: center; justify-content: space-between; height: 61px; }
.assignee p { font-size: 16px; line-height: 20px; text-align: center; color: #444; }

.field { display: flex; height: 25px; border: 1px solid #9f9f9f; border-radius: 3px; background: #fff; }
.field input, .field select { flex: 1; min-width: 0; width: 0; padding: 0 4px; border: 0; background: none; appearance: none; outline: 0; color: #333; }
.field button, .arrow { display: flex; align-items: center; justify-content: center; width: 21px; border-left: 1px solid #9f9f9f; }
.field .cal { width: 12px; height: 12px; }

.dates { display: flex; flex-direction: column; align-items: flex-start; padding: 10px 0 9px; color: #555; }
.dates .field { width: 203px; margin: 3px 0 10px; }
.dates .field:last-child { margin-bottom: 0; }
.dates input { color: #2f7fc4; }

.stage { display: flex; align-items: center; justify-content: center; gap: 4px; height: 51px; font-size: 16px; color: #8b0000; }

.percent { display: flex; align-items: center; gap: 5px; margin: 9px 0; color: #555; }
.percent .field { width: 113px; }
.percent input { padding: 0 2px; text-align: right; }

.register { height: 41px; margin: 0 20px 27px; padding: 0 6px; color: #00f; }
.register span { flex: 1; }
.side .effort { height: 30px; padding-top: 0; }
.icons { display: flex; gap: 24px; padding-right: 7px; }
.side .tags-title { margin: 9px 0; }
.tags input::placeholder { color: #bdbdbd; opacity: 1; }

.rating { display: flex; align-items: center; gap: 4px; height: 34px; padding: 0 5px; background: #faebd7; color: #555; }
.rating .field { flex: 1; }
.rating select { padding: 0 3px; color: #222; }
```
